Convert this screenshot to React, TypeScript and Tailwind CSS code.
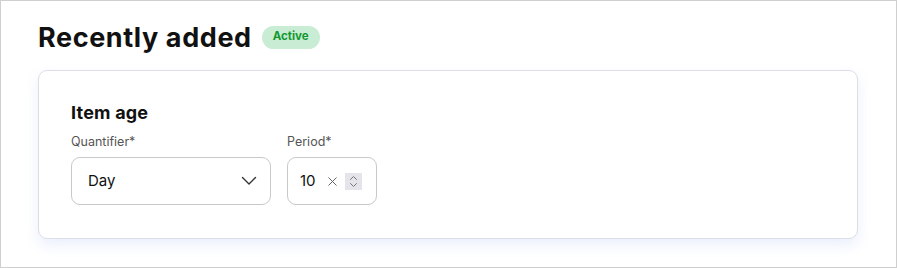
import React from "react";

export default function App() {
  return (
    <div className="w-[897px] h-[268px] bg-white border border-[#cfcfcf] overflow-hidden" style={{ fontFamily: "Inter, 'Noto Sans', sans-serif" }}>
      <div className="pl-[37px] pr-[38px] pt-[18px]">
        <div className="flex items-center gap-[10px] h-[36px]">
          <h1 className="text-[27px] font-bold text-[#111] tracking-[0.6px] leading-none">Recently added</h1>
          <span className="h-[23px] px-[11px] rounded-full bg-[#c9ecd4] text-[#12982f] text-[11.5px] font-bold flex items-center">Active</span>
        </div>
        <div className="mt-[15px] h-[169px] rounded-[9px] border border-[#dedee6] bg-white shadow-[0_6px_14px_rgba(220,228,250,0.6)] pl-[32px] pt-[30px]">
          <h2 className="text-[18px] font-bold text-[#111] leading-[24px] tracking-[0.2px]">Item age</h2>
          <div className="flex gap-[16px] mt-[9px]">
            <div className="flex flex-col">
              <label className="text-[12.5px] text-[#555] leading-[16px]">Quantifier*</label>
              <div className="mt-[7px] w-[200px] h-[48px] rounded-[9px] border border-[#c9c9c9] flex items-center justify-between pl-[16px] pr-[13px]">
                <span className="text-[15px] text-[#111]">Day</span>
                <svg width="16" height="10" viewBox="0 0 16 10" fill="none" stroke="#333" strokeWidth="1.4" strokeLinecap="round" strokeLinejoin="round">
                  <path d="M1.5 1.5 L8 8 L14.5 1.5" />
                </svg>
              </div>
            </div>
            <div className="flex flex-col">
              <label className="text-[12.5px] text-[#555] leading-[16px]">Period*</label>
              <div className="mt-[7px] w-[90px] h-[48px] rounded-[9px] border border-[#c9c9c9] flex items-center pl-[12px]">
                <span className="text-[15px] text-[#111]">10</span>
                <svg className="ml-[12px]" width="9" height="9" viewBox="0 0 9 9" fill="none" stroke="#666" strokeWidth="1">
                  <path d="M0.5 0.5 L8.5 8.5 M8.5 0.5 L0.5 8.5" />
                </svg>
                <div className="ml-[8px] w-[17px] h-[17px] bg-[#e4e4ea] flex items-center justify-center">
                  <svg width="9" height="13" viewBox="0 0 9 13" fill="none" stroke="#777" strokeWidth="1" strokeLinecap="round" strokeLinejoin="round">
                    <path d="M1.5 4.5 L4.5 1.5 L7.5 4.5 M1.5 8.5 L4.5 11.5 L7.5 8.5" />
                  </svg>
                </div>
              </div>
            </div>
          </div>
        </div>
      </div>
    </div>
  );
}
